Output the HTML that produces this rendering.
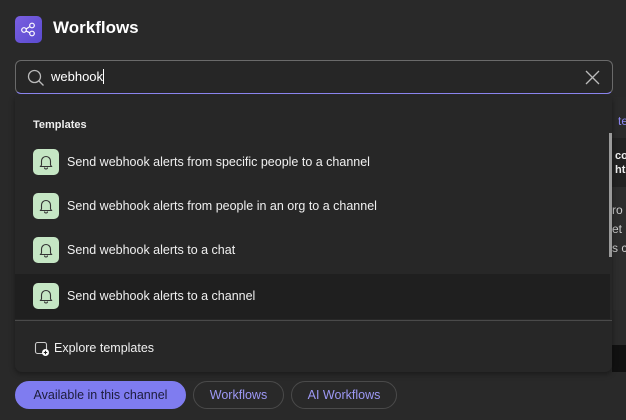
<!DOCTYPE html>
<html><head><style>
*{box-sizing:border-box;margin:0;padding:0}
body{width:626px;height:420px;background:#292929;font-family:"Liberation Sans","DejaVu Sans",sans-serif;color:#eee;position:relative;overflow:hidden}
.logo{position:absolute;left:15px;top:16px;width:27px;height:27px;border-radius:5px;background:linear-gradient(135deg,#7a5fe0,#5a4bd0)}
h1{position:absolute;left:53px;top:18px;font-size:17px;font-weight:bold;color:#fff}
.search{position:absolute;left:15px;top:60px;width:598px;height:34px;border:1px solid #6a6a6a;border-bottom:1px solid #8b85f0;border-radius:6px;background:#262626}
.search .t{position:absolute;left:35px;top:8px;font-size:13px;color:#fff}
.cur{display:inline-block;width:1px;height:15px;background:#fff;vertical-align:-3px}
.behind{position:absolute;left:612px;width:14px;white-space:nowrap;overflow:hidden}
.dd{position:absolute;left:15px;top:97px;width:597px;height:275px;background:#272727;border-radius:0 0 7px 7px;box-shadow:0 2px 6px rgba(0,0,0,.4)}
.hd{position:absolute;left:18px;top:22px;font-size:11px;font-weight:bold;color:#eee}
.row{position:absolute;left:0;width:595px;height:45px}
.row .ic{position:absolute;left:18px;top:9px;width:26px;height:26px;border-radius:5px;background:#c5e6c4}
.row .tx{position:absolute;left:52px;top:15px;font-size:12.5px;color:#f0f0f0}
.sb{position:absolute;left:594px;top:36px;width:3px;height:124px;background:#9a9a9a}
.sep{position:absolute;left:0;top:223px;width:597px;height:1px;background:#4a4a4a}
.ex{position:absolute;left:39px;top:244px;font-size:12.5px;color:#f0f0f0}
.pill{position:absolute;top:381px;height:28px;border-radius:14px;font-size:12.5px;line-height:26px;text-align:center;border:1px solid #4a4a4a;color:#9d98f5}
</style></head><body>
<div class="logo"><svg width="27" height="27" viewBox="0 0 27 27" fill="none" stroke="#fff" stroke-width="1.2"><circle cx="9" cy="14" r="2.3"/><circle cx="17" cy="9.5" r="2.3"/><circle cx="17" cy="17.5" r="2.3"/><path d="M11 13L15 10.5M11 15L15 16.8"/></svg></div>
<h1>Workflows</h1>
<div class="behind" style="top:97px;height:41px;background:#2a2a2a"><span style="position:absolute;left:6px;top:17px;font-size:12px;color:#8b85f0">te</span></div>
<div class="behind" style="top:138px;height:49px;background:#222"><span style="position:absolute;left:3px;top:11px;font-size:11px;font-weight:bold;line-height:14px">co<br>ht</span></div>
<div class="behind" style="top:187px;height:123px;background:#2d2d2d"><span style="position:absolute;left:0;top:14px;font-size:12px;line-height:19px;color:#ccc">ro<br>et<br>s c</span></div>
<div class="behind" style="top:310px;height:35px;background:#2a2a2a"></div>
<div class="behind" style="top:345px;height:27px;background:#111"></div>
<div class="search">
<svg style="position:absolute;left:11px;top:8px" width="18" height="18" viewBox="0 0 18 18" fill="none" stroke="#bbb" stroke-width="1.3"><circle cx="7.5" cy="7.5" r="6"/><path d="M12 12L16.5 16.5"/></svg>
<div class="t">webhook<span class="cur"></span></div>
<svg style="position:absolute;left:569px;top:9px" width="15" height="15" viewBox="0 0 15 15" stroke="#bbb" stroke-width="1.3"><path d="M1 1L14 14M14 1L1 14"/></svg>
</div>
<div class="dd">
<div class="hd">Templates</div>
<div class="row" style="top:43px"><div class="ic"></div><div class="tx">Send webhook alerts from specific people to a channel</div></div>
<div class="row" style="top:87px"><div class="ic"></div><div class="tx">Send webhook alerts from people in an org to a channel</div></div>
<div class="row" style="top:131px"><div class="ic"></div><div class="tx">Send webhook alerts to a chat</div></div>
<div class="row" style="top:177px;background:#1f1f1f"><div class="ic"></div><div class="tx">Send webhook alerts to a channel</div></div>
<div class="sb"></div>
<div class="sep"></div>
<svg style="position:absolute;left:19px;top:244px" width="16" height="16" viewBox="0 0 16 16" fill="none" stroke="#ccc" stroke-width="1.1"><rect x="1.5" y="1.5" width="11" height="11" rx="2"/><circle cx="11.5" cy="11.5" r="3.5" fill="#fff" stroke="none"/><path d="M11.5 9.8v3.4M9.8 11.5h3.4" stroke="#222"/></svg>
<div class="ex">Explore templates</div>
</div>
<svg width="0" height="0" style="position:absolute"><defs><g id="bell"><path d="M-4.5 3V-1a4.5 4.5 0 0 1 9 0V3l1 1.5h-11z M-1.5 5.5a1.5 1.5 0 0 0 3 0" fill="none" stroke="#333" stroke-width="1.1"/></g></defs></svg>
<svg style="position:absolute;left:33px;top:140px" width="26" height="180" viewBox="0 0 26 180"><use href="#bell" x="13" y="22"/><use href="#bell" x="13" y="66"/><use href="#bell" x="13" y="110"/><use href="#bell" x="13" y="156"/></svg>
<div class="pill" style="left:15px;width:171px;background:#7f7cf0;border-color:#7f7cf0;color:#1c1c3a">Available in this channel</div>
<div class="pill" style="left:193px;width:91px">Workflows</div>
<div class="pill" style="left:291px;width:106px">AI Workflows</div>
</body></html>
